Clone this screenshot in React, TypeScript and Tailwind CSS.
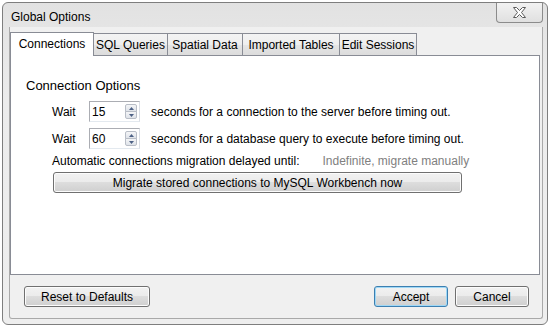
import type { ReactNode } from 'react';

const font = { fontFamily: '"Liberation Sans", Arial, sans-serif' };

const tabs = [
  { label: 'Connections', width: 'w-[84px]' },
  { label: 'SQL Queries', width: 'w-[75px]' },
  { label: 'Spatial Data', width: 'w-[76px]' },
  { label: 'Imported Tables', width: 'w-[98px]' },
  { label: 'Edit Sessions', width: 'w-[78px]' },
];

function Button({ children, className, primary }: { children: ReactNode; className: string; primary?: boolean }) {
  return (
    <div
      className={`flex h-[21px] items-center justify-center rounded-[3px] border ${
        primary
          ? 'border-[#3c7fb1] shadow-[inset_0_0_0_1px_#9fd8f6]'
          : 'border-[#707070] shadow-[inset_0_0_0_1px_#fcfcfc]'
      } bg-[linear-gradient(#f2f2f2_0%,#ebebeb_49%,#dddddd_50%,#cfcfcf_100%)] text-[12px] text-black ${className}`}
    >
      {children}
    </div>
  );
}

function Spinner({ value }: { value: string }) {
  return (
    <div className="flex h-[21px] w-[51px] items-center border border-[#abadb3] border-b-[#e3e9ef] border-r-[#dbdfe6] bg-white pl-[2px] pr-[2px]">
      <span className="flex-1 text-[12px]">{value}</span>
      <div className="flex flex-col">
        <div className="flex h-[8px] w-[12px] items-center justify-center rounded-t-[2px] border border-[#b8bdc6] bg-[linear-gradient(#f4f5f7,#dfe3e9)]">
          <svg width="5" height="3" viewBox="0 0 5 3">
            <path d="M0 3 L2.5 0 L5 3 Z" fill="#4d6185" />
          </svg>
        </div>
        <div className="-mt-px flex h-[8px] w-[12px] items-center justify-center rounded-b-[2px] border border-[#b8bdc6] bg-[linear-gradient(#f4f5f7,#dfe3e9)]">
          <svg width="5" height="3" viewBox="0 0 5 3">
            <path d="M0 0 L5 0 L2.5 3 Z" fill="#4d6185" />
          </svg>
        </div>
      </div>
    </div>
  );
}

export default function App() {
  return (
    <div className="h-[326px] w-[550px] overflow-hidden bg-[#ffffff]" style={font}>
      <div className="ml-[2px] mt-[2px] flex h-[323px] w-[546px] flex-col rounded-[6px] border border-[#7e7e7e] bg-[linear-gradient(#e2e2e2,#ececec_30%,#eeeeee)]">
        {/* title bar */}
        <div className="flex h-[24px] items-start justify-between">
          <span className="ml-[8px] mt-[7px] text-[12px] leading-[14px] text-black">Global Options</span>
          <div className="mr-[4px] flex h-[20px] w-[47px] items-center justify-center rounded-b-[4px] border border-t-0 border-[#8b8b8b] bg-[linear-gradient(#f2f2f2,#e0e0e0)]">
            <svg width="13" height="11" viewBox="0 0 13 11">
              <path
                d="M0.5 0.5 H3.5 L6.5 3.5 L9.5 0.5 H12.5 L8.5 5.5 L12.5 10.5 H9.5 L6.5 7.5 L3.5 10.5 H0.5 L4.5 5.5 Z"
                fill="#ffffff"
                stroke="#5a5a5a"
                strokeWidth="1"
              />
            </svg>
          </div>
        </div>

        {/* client area */}
        <div className="mb-[5px] ml-[6px] mr-[4px] flex flex-1 flex-col rounded-b-[3px] border border-t-0 border-[#a9a9a9] bg-[#f0f0f0]">
          <div className="mt-[5px] flex items-end">
            {tabs.map((tab, i) =>
              i === 0 ? (
                <div
                  key={tab.label}
                  className={`relative z-10 -mb-px flex h-[24px] ${tab.width} items-center justify-center border border-b-0 border-[#898c95] bg-white pb-[2px] text-[12px]`}
                >
                  {tab.label}
                </div>
              ) : (
                <div
                  key={tab.label}
                  className={`-ml-px flex h-[22px] ${tab.width} items-center justify-center border border-b-0 border-[#898c95] bg-[linear-gradient(#f4f4f4,#eeeeee_50%,#e5e5e5_51%,#dcdcdc)] text-[12px]`}
                >
                  {tab.label}
                </div>
              ),
            )}
          </div>

          {/* tab page */}
          <div className="mr-[2px] flex h-[220px] flex-col border border-[#898c95] bg-white">
            <div className="ml-[15px] mt-[21px] text-[13px] leading-[18px]">Connection Options</div>

            <div className="ml-[41px] mt-[6px] flex flex-col text-[12px]">
              <div className="flex h-[21px] items-center">
                <span className="w-[37px]">Wait</span>
                <Spinner value="15" />
                <span className="ml-[11px]">seconds for a connection to the server before timing out.</span>
              </div>
              <div className="mt-[6px] flex h-[21px] items-center">
                <span className="w-[37px]">Wait</span>
                <Spinner value="60" />
                <span className="ml-[11px]">seconds for a database query to execute before timing out.</span>
              </div>
              <div className="mt-[4px] flex h-[16px] items-center">
                <span>Automatic connections migration delayed until:</span>
                <span className="ml-[23px] text-[#808080]">Indefinite, migrate manually</span>
              </div>
              <Button className="ml-px mt-[3px] w-[409px]">Migrate stored connections to MySQL Workbench now</Button>
            </div>
          </div>

          {/* footer buttons */}
          <div className="mt-[11px] flex items-center">
            <Button className="ml-[14px] w-[126px]">Reset to Defaults</Button>
            <div className="flex-1" />
            <Button className="w-[74px]" primary>
              Accept
            </Button>
            <Button className="ml-[7px] mr-[13px] w-[74px]">Cancel</Button>
          </div>
        </div>
      </div>
    </div>
  );
}
